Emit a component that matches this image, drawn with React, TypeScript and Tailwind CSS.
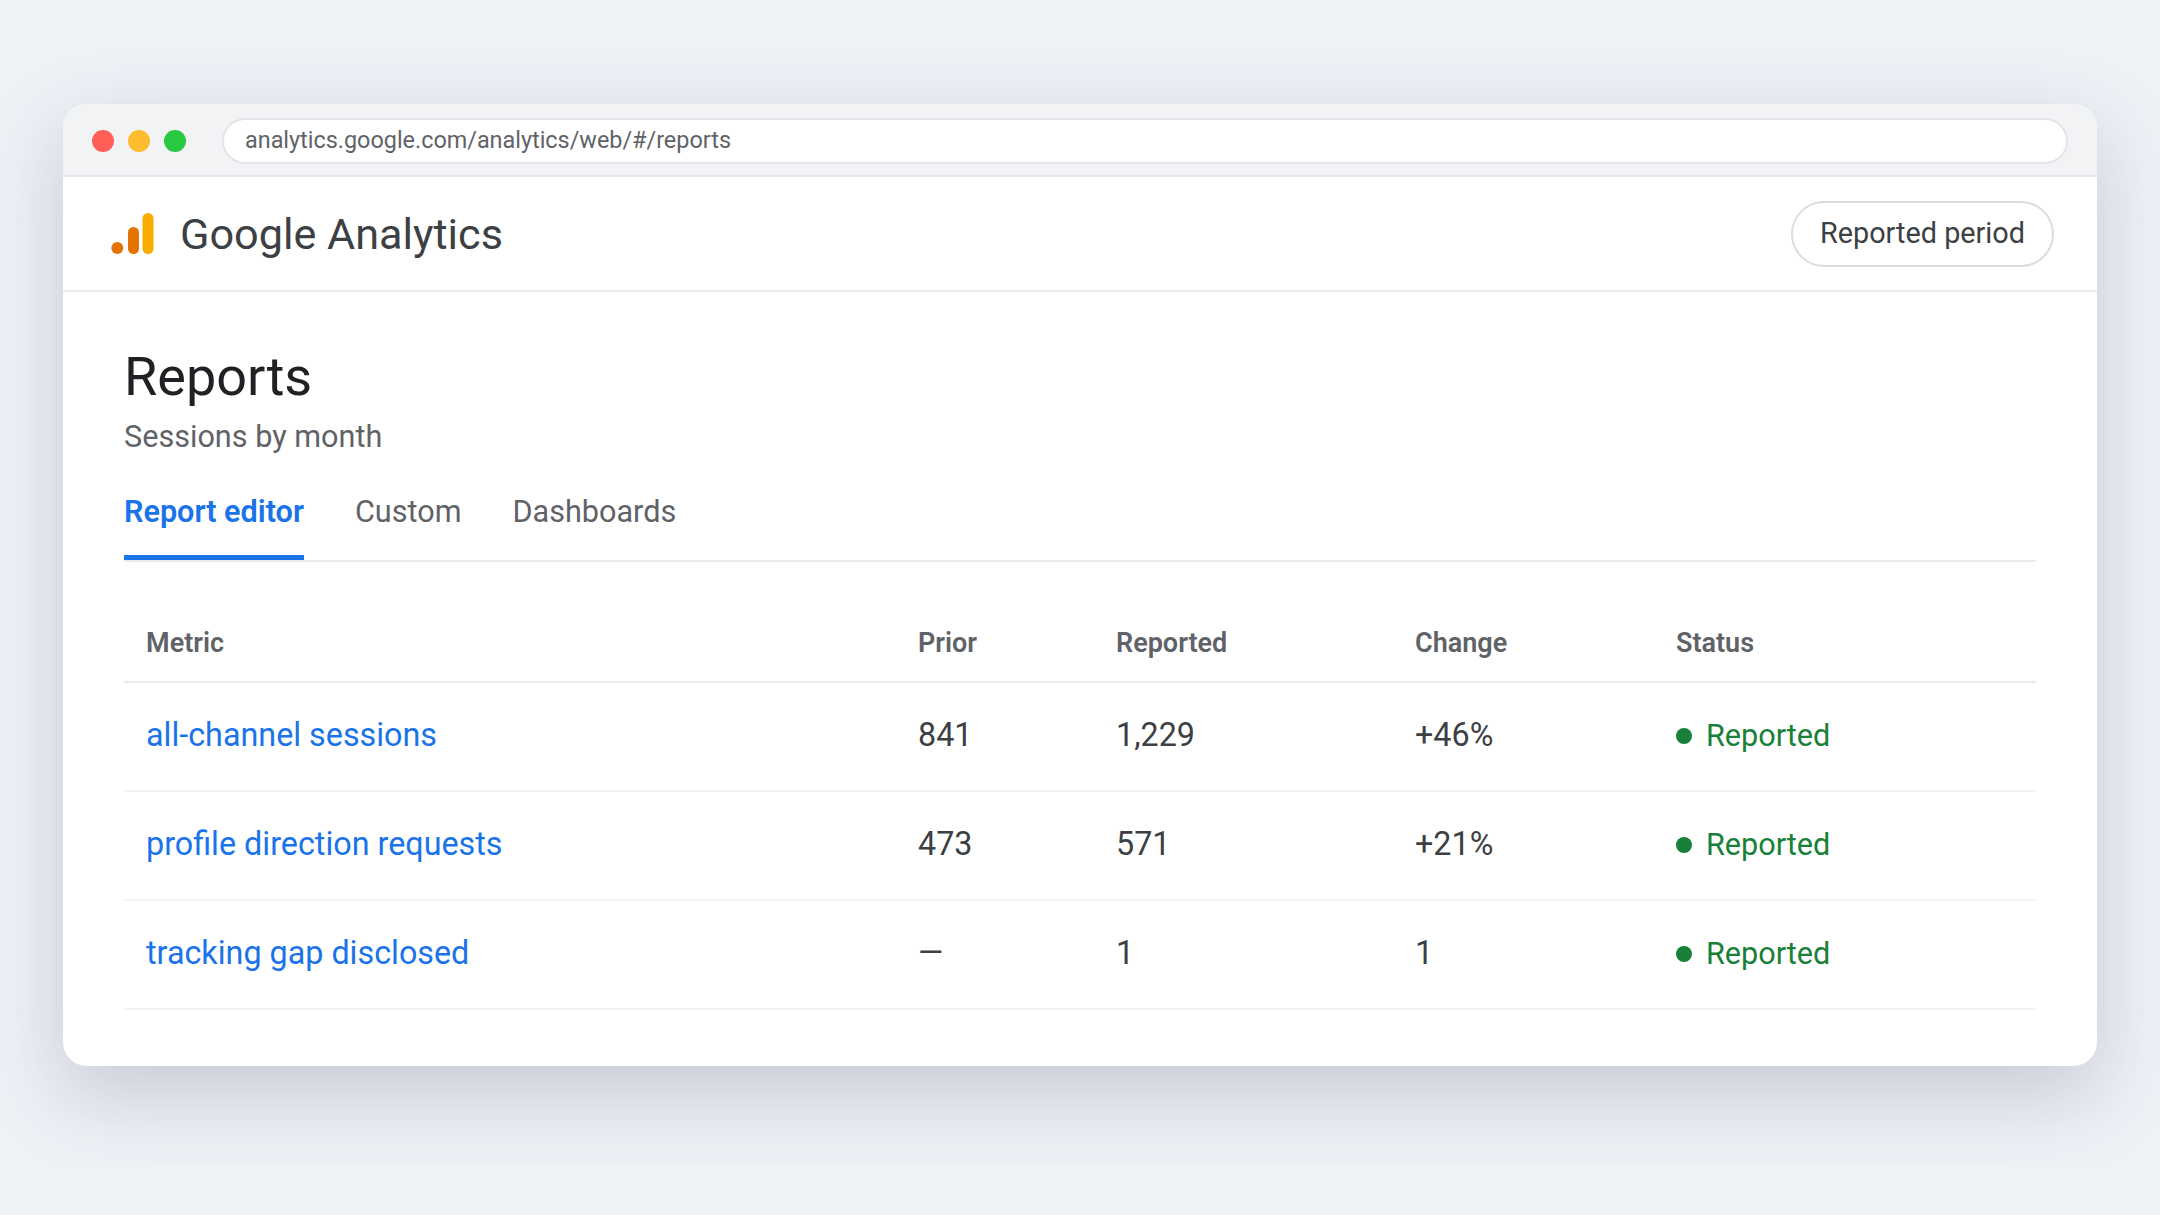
const rows = [
    { metric: "all-channel sessions", prior: "841", reported: "1,229", change: "+46%" },
    { metric: "profile direction requests", prior: "473", reported: "571", change: "+21%" },
    { metric: "tracking gap disclosed", prior: "—", reported: "1", change: "1" },
]

const columns = "grid grid-cols-[772px_198px_299px_261px_1fr] items-center px-[22px]"

const AnalyticsLogo = () => (
    <svg width="43" height="41" viewBox="0 0 43 41" className="shrink-0">
        <circle cx="6.3" cy="35" r="6" fill="#e37400" />
        <rect x="17" y="14" width="11" height="27" rx="5.5" fill="#e37400" />
        <rect x="31.5" y="0" width="11" height="41" rx="5.5" fill="#f9ab00" />
    </svg>
)

const TitleBar = () => (
    <div className="flex h-[73px] items-center gap-[36px] border-b-2 border-[#e3e5ea] bg-[#f1f3f5] pl-[29px] pr-[29px] pt-[2px]">
        <div className="flex items-center gap-[14px]">
            <span className="size-[22px] rounded-full bg-[#ff5f57]" />
            <span className="size-[22px] rounded-full bg-[#febc2e]" />
            <span className="size-[22px] rounded-full bg-[#28c840]" />
        </div>
        <div className="flex h-[46px] flex-1 items-center rounded-full border-2 border-[#e3e5ea] bg-white px-[21px] text-[23.4px] text-[#5f6368]">
            analytics.google.com/analytics/web/#/reports
        </div>
    </div>
)

const Header = () => (
    <div className="flex h-[115px] items-center justify-between border-b-2 border-[#e8eaed] pl-[48px] pr-[43px]">
        <div className="flex items-center gap-[26px]">
            <AnalyticsLogo />
            <span className="pt-[4px] text-[43.2px] text-[#3c4043]">Google Analytics</span>
        </div>
        <button className="h-[66px] rounded-full border-2 border-[#dadce0] bg-white px-[27px] text-[28.8px] text-[#3c4043]">
            Reported period
        </button>
    </div>
)

const Tabs = () => (
    <div className="mt-[32px] flex gap-[51px] border-b-2 border-[#e8eaed]">
        <div className="border-b-[5px] border-[#1a73e8] pb-[20px] text-[30.6px] font-semibold text-[#1a73e8]">
            Report editor
        </div>
        <div className="text-[30.6px] text-[#5f6368]">Custom</div>
        <div className="text-[30.6px] text-[#5f6368]">Dashboards</div>
    </div>
)

const ReportTable = () => (
    <div className="mt-[41px]">
        <div className={`${columns} h-[80px] border-b-2 border-[#e8eaed] pt-[2px] text-[27px] font-semibold text-[#5f6368]`}>
            <div>Metric</div>
            <div>Prior</div>
            <div>Reported</div>
            <div>Change</div>
            <div>Status</div>
        </div>
        {rows.map((row) => (
            <div key={row.metric} className={`${columns} h-[109px] border-b-2 border-[#f1f3f4] text-[32.3px] text-[#3c4043]`}>
                <div className="pb-[2px] text-[#1a73e8]">{row.metric}</div>
                <div className="pb-[2px]">{row.prior}</div>
                <div className="pb-[2px]">{row.reported}</div>
                <div className="pb-[2px]">{row.change}</div>
                <div className="flex items-center gap-[14px] text-[30.6px] text-[#188038]">
                    <span className="size-[16px] rounded-full bg-[#188038]" />
                    Reported
                </div>
            </div>
        ))}
    </div>
)

export default function App() {
    return (
        <div className="h-[1215px] w-[2160px] overflow-hidden bg-[#eef1f6] font-['Roboto',sans-serif]">
            <div className="h-[1165px] overflow-hidden px-[63px] pt-[104px]">
                <div className="h-[962px] overflow-hidden rounded-[24px] bg-white shadow-[0_28px_80px_rgba(60,64,90,0.22)]">
                    <TitleBar />
                    <Header />
                    <div className="px-[61px] pt-[55px]">
                        <h1 className="text-[54px] leading-[60px] text-[#202124]">Reports</h1>
                        <p className="mt-[10px] text-[30.6px] leading-[40px] text-[#5f6368]">Sessions by month</p>
                        <Tabs />
                        <ReportTable />
                    </div>
                </div>
            </div>
        </div>
    )
}
